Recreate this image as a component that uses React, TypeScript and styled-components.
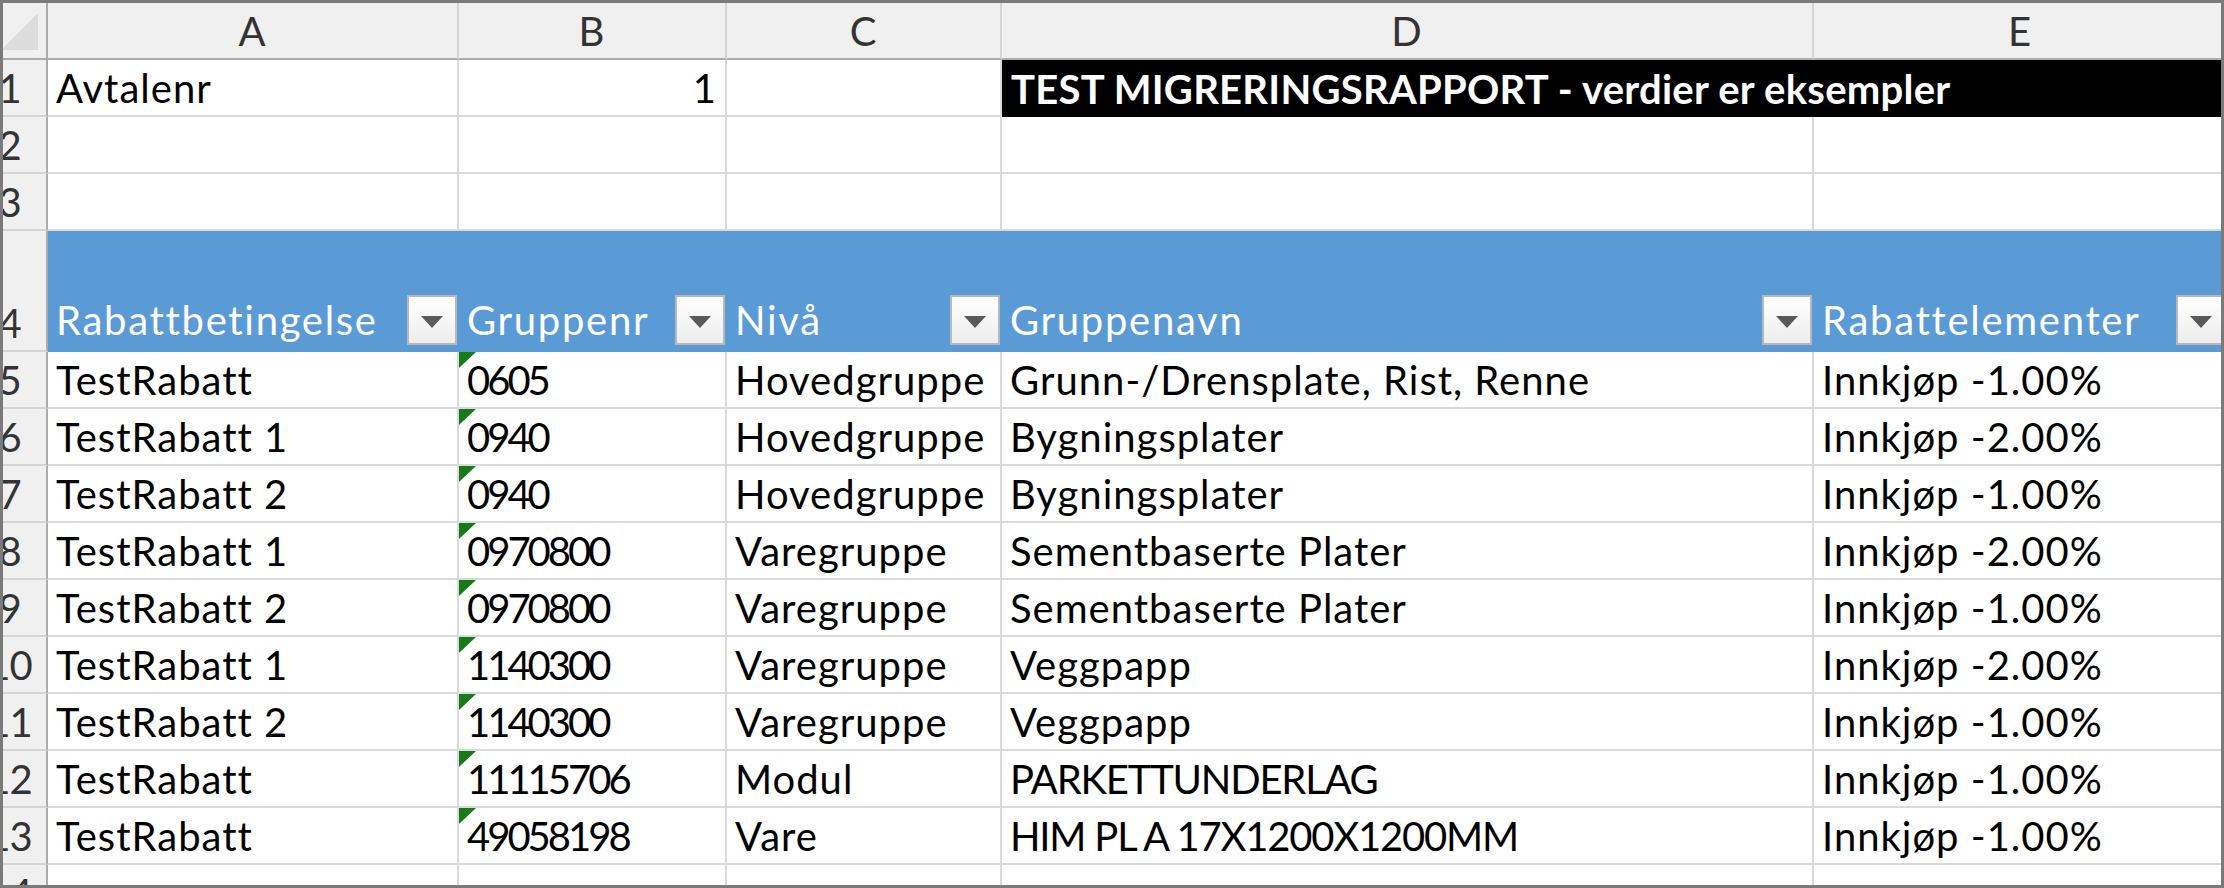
import React from 'react'
import styled, { createGlobalStyle, css } from 'styled-components'

const GRID = '#dadada'
const HEAD_LINE = '#ababab'
const HEAD_BG = '#f0f0f0'

const GlobalStyle = createGlobalStyle`
  html, body {
    margin: 0;
    padding: 0;
    background: #fff;
  }
  body {
    font-family: Lato, 'Open Sans', sans-serif;
  }
`

const Frame = styled.div`
  width: 2224px;
  height: 888px;
  box-sizing: border-box;
  border: 3px solid #7a7a7a;
  overflow: hidden;
  background: #fff;
`

const Sheet = styled.div`
  display: grid;
  grid-template-columns: 75px 411px 268px 275px 812px 414px;
  grid-template-rows: 57px 57px 57px 57px 121px repeat(10, 57px);
  margin-left: -30px;
  font-family: Lato, 'Open Sans', sans-serif;
  font-size: 40px;
  line-height: 40px;
  letter-spacing: 1px;
`

const Corner = styled.div`
  box-sizing: border-box;
  display: flex;
  justify-content: flex-end;
  align-items: flex-end;
  padding: 0 8px 8px 0;
  background: ${HEAD_BG};
  border-right: 2px solid ${HEAD_LINE};
  border-bottom: 2px solid ${HEAD_LINE};
`

const CornerMark = styled.span`
  width: 0;
  height: 0;
  border-left: 37px solid transparent;
  border-bottom: 37px solid #dcdcdc;
`

const ColHead = styled.div`
  box-sizing: border-box;
  display: flex;
  justify-content: center;
  align-items: flex-end;
  padding-bottom: 7px;
  background: ${HEAD_BG};
  color: #333;
  border-right: 2px solid #d4d4d4;
  border-bottom: 2px solid ${HEAD_LINE};
`

const RowHead = styled.div`
  box-sizing: border-box;
  display: flex;
  justify-content: center;
  align-items: flex-end;
  padding-bottom: 7px;
  background: ${HEAD_BG};
  color: #333;
  letter-spacing: -1px;
  border-right: 2px solid ${HEAD_LINE};
  border-bottom: 2px solid #d4d4d4;
`

const Cell = styled.div<{ $align?: 'left' | 'right'; $flag?: boolean; $tracking?: number }>`
  position: relative;
  box-sizing: border-box;
  display: flex;
  align-items: flex-end;
  justify-content: ${p => (p.$align === 'right' ? 'flex-end' : 'flex-start')};
  padding: 0 8px 7px 8px;
  background: #fff;
  color: #000;
  white-space: nowrap;
  overflow: hidden;
  letter-spacing: ${p => (p.$tracking ?? 1)}px;
  border-right: 2px solid ${GRID};
  border-bottom: 2px solid ${GRID};

  ${p =>
    p.$flag &&
    css`
      &::before {
        content: '';
        position: absolute;
        top: 0;
        left: 0;
        width: 0;
        height: 0;
        border-top: 16px solid #177a17;
        border-right: 17px solid transparent;
      }
    `}
`

const Title = styled.div`
  grid-column: span 2;
  display: flex;
  align-items: flex-end;
  padding: 0 0 8px 9px;
  background: #000;
  color: #fff;
  font-weight: 700;
  letter-spacing: 0.25px;
  white-space: nowrap;
`

const HeadCell = styled.div`
  display: flex;
  justify-content: space-between;
  align-items: flex-end;
  padding-left: 8px;
  background: #5b9bd5;
  color: #fff;
  white-space: nowrap;
  overflow: hidden;
`

const HeadLabel = styled.span`
  margin-bottom: 12px;
  letter-spacing: 1.7px;
`

const FilterButton = styled.span`
  flex: none;
  display: flex;
  align-items: center;
  justify-content: center;
  box-sizing: border-box;
  width: 50px;
  height: 50px;
  margin: 0 2px 7px 0;
  border: 2px solid #b8b8b8;
  background: linear-gradient(#ffffff, #ededed);

  &::after {
    content: '';
    margin-top: 3px;
    border-left: 11px solid transparent;
    border-right: 11px solid transparent;
    border-top: 12px solid #5a5a5a;
  }
`

const columns = ['A', 'B', 'C', 'D', 'E']
const headers = ['Rabattbetingelse', 'Gruppenr', 'Nivå', 'Gruppenavn', 'Rabattelementer']

const rows = [
  ['TestRabatt', '0605', 'Hovedgruppe', 'Grunn-/Drensplate, Rist, Renne', 'Innkjøp -1.00%'],
  ['TestRabatt 1', '0940', 'Hovedgruppe', 'Bygningsplater', 'Innkjøp -2.00%'],
  ['TestRabatt 2', '0940', 'Hovedgruppe', 'Bygningsplater', 'Innkjøp -1.00%'],
  ['TestRabatt 1', '0970800', 'Varegruppe', 'Sementbaserte Plater', 'Innkjøp -2.00%'],
  ['TestRabatt 2', '0970800', 'Varegruppe', 'Sementbaserte Plater', 'Innkjøp -1.00%'],
  ['TestRabatt 1', '1140300', 'Varegruppe', 'Veggpapp', 'Innkjøp -2.00%'],
  ['TestRabatt 2', '1140300', 'Varegruppe', 'Veggpapp', 'Innkjøp -1.00%'],
  ['TestRabatt', '11115706', 'Modul', 'PARKETTUNDERLAG', 'Innkjøp -1.00%'],
  ['TestRabatt', '49058198', 'Vare', 'HIM PL A 17X1200X1200MM', 'Innkjøp -1.00%'],
]

// Lato's figures and capitals run wider than the sheet's font, lowercase a bit narrower
const trackingFor = (value: string) => {
  if (/^\d+$/.test(value)) return -3
  if (value === value.toUpperCase()) return -1.2
  return 1
}

const EmptyRow = ({ n }: { n: number }) => (
  <>
    <RowHead>{n}</RowHead>
    {columns.map(c => (
      <Cell key={c} />
    ))}
  </>
)

export default function App() {
  return (
    <>
      <GlobalStyle />
      <Frame>
        <Sheet>
          <Corner>
            <CornerMark />
          </Corner>
          {columns.map(c => (
            <ColHead key={c}>{c}</ColHead>
          ))}

          <RowHead>1</RowHead>
          <Cell>Avtalenr</Cell>
          <Cell $align="right">1</Cell>
          <Cell />
          <Title>TEST MIGRERINGSRAPPORT - verdier er eksempler</Title>

          <EmptyRow n={2} />
          <EmptyRow n={3} />

          <RowHead>4</RowHead>
          {headers.map(h => (
            <HeadCell key={h}>
              <HeadLabel>{h}</HeadLabel>
              <FilterButton />
            </HeadCell>
          ))}

          {rows.map((r, i) => (
            <React.Fragment key={i}>
              <RowHead>{i + 5}</RowHead>
              {r.map((v, j) => (
                <Cell key={j} $flag={j === 1} $tracking={trackingFor(v)}>
                  {v}
                </Cell>
              ))}
            </React.Fragment>
          ))}

          <EmptyRow n={14} />
        </Sheet>
      </Frame>
    </>
  )
}
